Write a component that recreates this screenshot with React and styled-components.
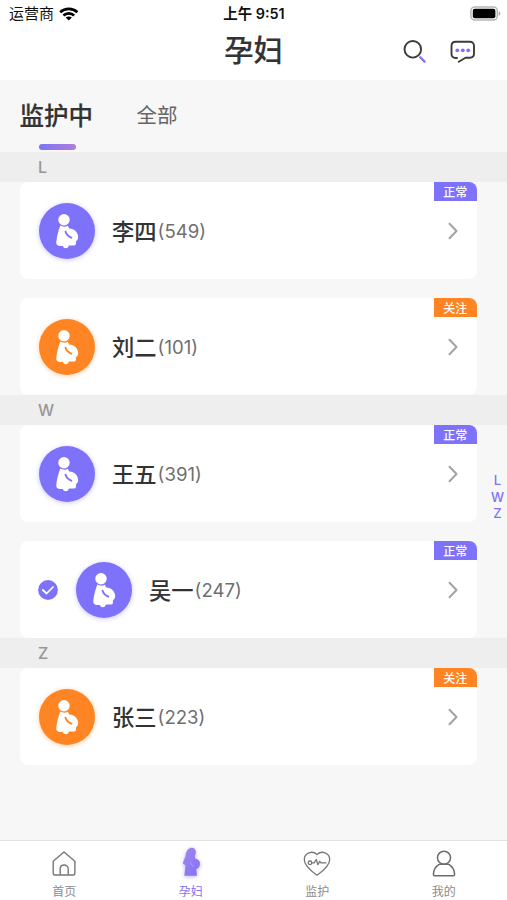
import React from "react";
import styled, { createGlobalStyle } from "styled-components";

const COLOR = {
  PURPLE: "#7e72fb",
  ORANGE: "#ff8424",
  TEXT: "#333333",
  SUB: "#6f6f6f",
  GRAY: "#969696",
  BACKGROUND: "#f7f7f7",
};

const SECTIONS = [
  {
    letter: "L",
    people: [
      { name: "李四", count: 549 },
      { name: "刘二", count: 101, watch: true },
    ],
  },
  {
    letter: "W",
    people: [
      { name: "王五", count: 391 },
      { name: "吴一", count: 247, checked: true },
    ],
  },
  { letter: "Z", people: [{ name: "张三", count: 223, watch: true }] },
];

const WifiIcon = () => (
  <svg width="20" height="14" viewBox="0 0 20 14" fill="none">
    <path d="M1.200 5.200C6 .7 13.600.7 18.400 5.200" stroke="#000" strokeWidth="2.700" />
    <path d="M4.400 8.500c3-2.900 7.800-2.900 10.800 0" stroke="#000" strokeWidth="2.600" />
    <path d="M9.800 13.500 6.700 10.500c1.700-1.500 4.500-1.500 6.200 0z" fill="#000" />
  </svg>
);

const BatteryIcon = () => (
  <svg width="31" height="15" viewBox="0 0 31 15">
    <rect x="0.900" y="0.900" width="26.400" height="13.200" rx="4" fill="#fff" stroke="#b5b5b5" strokeWidth="1.500" />
    <rect x="2.800" y="2.800" width="22.600" height="9.400" rx="2" fill="#000" />
    <path d="M28.700 5.200c2.200.8 2.200 3.800 0 4.600z" fill="#aaa" />
  </svg>
);

const SearchIcon = () => (
  <svg width="24" height="24" viewBox="0 0 24 24" fill="none" strokeLinecap="round">
    <circle cx="9.800" cy="9.300" r="8.300" stroke="#3b3b3b" strokeWidth="1.900" />
    <path d="m17.200 17.300 4.400 4.300" stroke={COLOR.PURPLE} strokeWidth="2.300" />
  </svg>
);

const ChatIcon = () => (
  <svg width="26" height="24" viewBox="0 0 26 24" fill="none">
    <path
      d="M7 18H5.500C3 18 1.500 16.500 1.500 14V6c0-2.700 1.500-4.200 4.200-4.200h14.100C22.500 1.800 24 3.300 24 6v7.500c0 2.700-1.500 4.200-4.200 4.200H15.500L8.800 21.700"
      stroke="#3b3b3b"
      strokeWidth="1.900"
      strokeLinecap="round"
      strokeLinejoin="round"
    />
    <g fill={COLOR.PURPLE}>
      <circle cx="7.300" cy="10.300" r="1.900" />
      <circle cx="12.800" cy="10.300" r="1.900" />
      <circle cx="18.200" cy="10.300" r="1.900" />
    </g>
  </svg>
);

const MotherIcon = ({ color }) => (
  <svg width="56" height="56" viewBox="0 0 56 56">
    <circle cx="25" cy="16.700" r="5.700" fill="#fff" />
    <path
      d="M21.300 22.600C23.800 24 26.400 24 28.800 22.700L30.200 25.600C35 25.400 39 29.500 39.200 34C39.200 36.600 37.500 37.600 36.900 38.500V40.800C36.900 42 36.300 42.500 35.200 42.500H29.900C29.500 44 28.600 45.200 26.800 45.200C25.200 45.200 24.300 44.200 23.900 42.900H20.500C18.300 42.700 16.900 41.200 17.300 38.700C17.900 33.300 19.500 27.500 21.300 22.600Z"
      fill="#fff"
    />
    <path d="M26.500 28.600C27.200 31.200 29.200 33.400 32.300 34.700" fill="none" stroke={color} strokeWidth="1.900" strokeLinecap="round" />
  </svg>
);

const CheckIcon = () => (
  <svg width="20" height="20" viewBox="0 0 20 20" fill="none">
    <circle cx="10" cy="10" r="9.900" fill={COLOR.PURPLE} />
    <path d="m4.800 10 3.800 3.500 6.400-6.500" stroke="#fff" strokeWidth="1.700" strokeLinecap="round" strokeLinejoin="round" />
  </svg>
);

const ChevronIcon = () => (
  <svg width="10" height="18" viewBox="0 0 10 18" fill="none">
    <path d="m1.500 1.800 7 7.200-7 7.200" stroke="#a3a3a3" strokeWidth="2" strokeLinecap="round" strokeLinejoin="round" />
  </svg>
);

const HomeIcon = () => (
  <svg width="28" height="28" viewBox="0 0 28 28" fill="none" stroke="#777" strokeWidth="1.400" strokeLinejoin="round">
    <path d="M3.200 11.200 14 2l10.900 9.200v12.300c0 1-.5 1.500-1.500 1.500H4.700c-1 0-1.500-.5-1.500-1.500z" />
    <path d="M10.200 25v-6.200c0-5 8-5 8 0V25" />
  </svg>
);

const PregnantIcon = () => (
  <PurpleShadow width="28" height="30" viewBox="0 0 28 30">
    <defs>
      <linearGradient id="body" x1="0" y1="0" x2="1" y2="1">
        <stop offset="0" stopColor="#a588ee" />
        <stop offset="1" stopColor="#8270f5" />
      </linearGradient>
    </defs>
    <path
      d="M13.500.9C16.700.2 19 2.200 18.800 5.200C18.700 6.800 18.200 8.200 17.800 9.500L18.200 11.400C20.900 12 23 13.900 23 16.600C23 19.600 21.500 21.500 19.200 22.200L20 28.700H7.300L8.500 18.500L5.800 16.200L8.500 9C8.800 5.500 10.200 1.700 13.500.9Z"
      fill="url(#body)"
    />
    <path d="M13.700 15.800c.2 1.900 1.300 3 3 3.300" fill="none" stroke="#b79dfa" strokeWidth="1" strokeLinecap="round" />
  </PurpleShadow>
);

const HeartIcon = () => (
  <svg width="28" height="28" viewBox="0 0 28 28" fill="none" stroke="#777" strokeWidth="1.300" strokeLinejoin="round" strokeLinecap="round">
    <path d="M14 25.200C9.500 21.800 1.300 16.500 1.300 9.500C1.300 2.600 9.500.2 14 4.500C18.500.2 26.700 2.600 26.700 9.500C26.700 16.500 18.500 21.800 14 25.200z" />
    <circle cx="7" cy="12.800" r="1.800" />
    <path d="M8.900 12.800h2.200l2.200-3.300 1.600 5.200 1.900-3.400 1.100 1.500H23" />
  </svg>
);

const UserIcon = () => (
  <svg width="28" height="28" viewBox="0 0 28 28" fill="none" stroke="#6c6c6c" strokeWidth="1.500" strokeLinejoin="round">
    <circle cx="14" cy="7.700" r="6.500" />
    <path d="M9.500 14.200h9c3.700 2.200 6.100 6 6.100 10.300 0 .8-.4 1.200-1.100 1.200H4.500c-.7 0-1.100-.4-1.100-1.200 0-4.300 2.400-8.100 6.100-10.300z" />
  </svg>
);

const NAV = [
  { label: "首页", Icon: HomeIcon },
  { label: "孕妇", Icon: PregnantIcon, active: true },
  { label: "监护", Icon: HeartIcon },
  { label: "我的", Icon: UserIcon },
];

const PersonCard = ({ name, count, watch, checked }) => {
  const color = watch ? COLOR.ORANGE : COLOR.PURPLE;
  return (
    <Card>
      {checked && (
        <CheckBox>
          <CheckIcon />
        </CheckBox>
      )}
      <Avatar $color={color}>
        <MotherIcon color={color} />
      </Avatar>
      <Name>{name}</Name>
      <Count>({count})</Count>
      <ChevronIcon />
      <Badge $color={color}>{watch ? "关注" : "正常"}</Badge>
    </Card>
  );
};

export default function App() {
  return (
    <>
      <GlobalStyle />
      <Screen>
        <StatusBar>
          <Carrier>
            运营商
            <WifiIcon />
          </Carrier>
          <Clock>上午 9:51</Clock>
          <Battery>
            <BatteryIcon />
          </Battery>
        </StatusBar>
        <Header>
          <Title>孕妇</Title>
          <Actions>
            <SearchIcon />
            <ChatIcon />
          </Actions>
        </Header>
        <Tabs>
          <Tab $active>监护中</Tab>
          <Tab>全部</Tab>
        </Tabs>
        <List>
          {SECTIONS.map(({ letter, people }) => (
            <section key={letter}>
              <Letter>{letter}</Letter>
              <Cards>
                {people.map((person) => (
                  <PersonCard key={person.name} {...person} />
                ))}
              </Cards>
            </section>
          ))}
          <IndexBar>
            {SECTIONS.map(({ letter }) => (
              <span key={letter}>{letter}</span>
            ))}
          </IndexBar>
        </List>
        <BottomNav>
          {NAV.map(({ label, Icon, active }) => (
            <NavItem key={label} $active={active}>
              <Icon />
              {label}
            </NavItem>
          ))}
        </BottomNav>
      </Screen>
    </>
  );
}

const GlobalStyle = createGlobalStyle`
  * {
    box-sizing: border-box;
  }
  body {
    margin: 0;
    font-family: Inter, "Noto Sans CJK SC", sans-serif;
    color: ${COLOR.TEXT};
  }
  svg {
    display: block;
    flex-shrink: 0;
  }
`;

const Screen = styled.div`
  display: flex;
  flex-direction: column;
  width: 507px;
  height: 900px;
  overflow: hidden;
  background: ${COLOR.BACKGROUND};
`;

const StatusBar = styled.div`
  display: grid;
  grid-template-columns: 1fr auto 1fr;
  align-items: center;
  height: 26px;
  padding: 0 6px 0 9px;
  background: #fff;
  color: #111;
`;

const Carrier = styled.div`
  display: flex;
  align-items: center;
  gap: 5px;
  font-size: 15px;
  line-height: 26px;
  padding-top: 1px;

  svg {
    margin-top: -1px;
  }
`;

const Clock = styled.div`
  padding: 1px 2px 0 0;
  font-size: 14.4px;
  font-weight: 600;
  line-height: 26px;
`;

const Battery = styled.div`
  justify-self: end;
`;

const Header = styled.header`
  display: grid;
  grid-template-columns: 1fr auto 1fr;
  align-items: center;
  height: 54px;
  padding: 0 31px 6px;
  background: #fff;
`;

const Title = styled.h1`
  grid-column: 2;
  margin: 0;
  padding-top: 1px;
  font-size: 29.3px;
  font-weight: 500;
  line-height: 47px;
  -webkit-text-stroke: 0.2px;
`;

const Actions = styled.div`
  display: flex;
  justify-content: flex-end;
  gap: 23px;
  padding-top: 4px;
`;

const Tabs = styled.div`
  display: flex;
  gap: 43.5px;
  height: 72.3px;
  padding-left: 19.5px;
`;

const Tab = styled.div`
  position: relative;
  font-size: ${({ $active }) => ($active ? "24.5px" : "20.5px")};
  font-weight: ${({ $active }) => ($active ? 500 : 400)};
  line-height: 72px;
  color: ${({ $active }) => ($active ? COLOR.TEXT : "#666")};
  -webkit-text-stroke: ${({ $active }) => ($active ? "0.2px" : "0")};

  &::after {
    content: "";
    display: ${({ $active }) => ($active ? "block" : "none")};
    position: absolute;
    bottom: 2px;
    left: 19px;
    width: 37px;
    height: 6px;
    border-radius: 3px;
    background: linear-gradient(to right, #7b74f6, #b07ddc);
  }
`;

const List = styled.main`
  position: relative;
  flex: 1;
`;

const Letter = styled.div`
  height: 29.5px;
  padding-left: 38px;
  background: #eeeeee;
  color: ${COLOR.GRAY};
  font-size: 16px;
  font-weight: 500;
  line-height: 31px;
`;

const Cards = styled.div`
  display: flex;
  flex-direction: column;
  gap: 18.6px;
  padding: 0 30.5px 0 20px;
`;

const Card = styled.div`
  position: relative;
  display: flex;
  align-items: center;
  height: 97.5px;
  padding: 0 18.5px 0 19px;
  border-radius: 8px;
  background: #fff;

  > svg {
    margin-left: auto;
  }
`;

const CheckBox = styled.div`
  margin: 0 18px 0 -1px;
`;

const Avatar = styled.div`
  width: 56px;
  height: 56px;
  margin-right: 17px;
  border-radius: 50%;
  background: ${({ $color }) => $color};
  box-shadow: 0 1px 5px ${({ $color }) => $color}66;
`;

const Name = styled.span`
  padding-bottom: 2px;
  font-size: 22.3px;
  font-weight: 500;
`;

const Count = styled.span`
  margin-left: 1px;
  color: ${COLOR.SUB};
  font-size: 18.6px;
`;

const Badge = styled.span`
  position: absolute;
  top: 0;
  right: 0;
  width: 42.5px;
  height: 19.5px;
  border-top-right-radius: 8px;
  background: ${({ $color }) => $color};
  color: #fff;
  font-size: 12px;
  font-weight: 500;
  line-height: 21px;
  text-align: center;
`;

const IndexBar = styled.div`
  position: absolute;
  top: 319.5px;
  right: 2px;
  display: flex;
  flex-direction: column;
  width: 15px;
  align-items: center;
  color: ${COLOR.PURPLE};
  font-size: 13px;
  font-weight: 500;
  line-height: 16.7px;
`;

const BottomNav = styled.nav`
  display: grid;
  grid-template-columns: repeat(4, 1fr);
  height: 60px;
  padding-left: 1px;
  border-top: 1px solid #e2e2e2;
  background: #fff;
`;

const NavItem = styled.div`
  display: flex;
  flex-direction: column;
  align-items: center;
  height: 60px;
  justify-content: space-between;
  padding: 9px 0 0;
  color: ${({ $active }) => ($active ? COLOR.PURPLE : "#8c8c8c")};
  font-size: 12px;
  line-height: 19px;
`;

const PurpleShadow = styled.svg`
  margin-top: -3px;
  filter: drop-shadow(0 1px 2px #7e72fb88);
`;
